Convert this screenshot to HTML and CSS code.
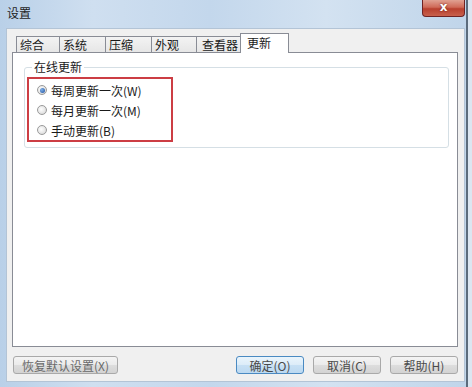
FILE: index.html
```html
<!DOCTYPE html>
<html>
<head>
  <meta charset="UTF-8">
  <title>设置</title>
  <link rel="stylesheet" href="styles.css">
</head>
<body>
  <div class="window">
    <div class="titlebar">
      <span class="title">设置</span>
      <div class="close-btn">x</div>
    </div>

    <div class="client">
      <div class="tabs">
        <div class="tab tab-a">综合</div>
        <div class="tab tab-b">系统</div>
        <div class="tab tab-b">压缩</div>
        <div class="tab tab-c">外观</div>
        <div class="tab tab-d">查看器</div>
        <div class="tab tab-active">更新</div>
      </div>

      <div class="panel">
        <fieldset class="group">
          <legend>在线更新</legend>
          <div class="highlight">
            <label class="radio-row">
              <span class="radio checked"></span>
              <span>每周更新一次(W)</span>
            </label>
            <label class="radio-row">
              <span class="radio"></span>
              <span>每月更新一次(M)</span>
            </label>
            <label class="radio-row">
              <span class="radio"></span>
              <span>手动更新(B)</span>
            </label>
          </div>
        </fieldset>
      </div>

      <div class="buttons">
        <button class="btn btn-wide">恢复默认设置(X)</button>
        <div class="spacer"></div>
        <button class="btn btn-default">确定(O)</button>
        <button class="btn">取消(C)</button>
        <button class="btn">帮助(H)</button>
      </div>
    </div>
  </div>
</body>
</html>
```

FILE: styles.css
```css
body {
  margin: 0;
  width: 472px;
  height: 387px;
  overflow: hidden;
  background-color: #dbe6f1;
  font-family: "Noto Sans CJK SC", "Liberation Sans", sans-serif;
  font-size: 12px;
  color: #1a1a1a;
}

.window {
  width: 468px;
  height: 387px;
  box-sizing: border-box;
  border-right: 2px solid #5b6b7c;
  background: linear-gradient(to right, #b9d0e8 0%, #cfdff0 20%, #c3d7ec 45%, #d3e2f1 70%, #c0d5ea 100%);
  display: flex;
  flex-direction: column;
}

/* title bar */

.titlebar {
  height: 28px;
  display: flex;
  justify-content: space-between;
  align-items: flex-start;
  padding-left: 7px;
  flex-shrink: 0;
}

.title {
  margin-top: 6px;
  line-height: 14px;
  color: #1e1e1e;
}

.close-btn {
  width: 43px;
  height: 17px;
  box-sizing: border-box;
  margin-right: 1px;
  border: 1px solid #6e2323;
  border-top: none;
  border-radius: 0 0 4px 4px;
  background: linear-gradient(to bottom, #e0a192 0%, #cf6a58 45%, #b8402e 55%, #c8604c 100%);
  color: #ffffff;
  font-family: "DejaVu Sans", sans-serif;
  font-weight: bold;
  font-size: 12px;
  line-height: 14px;
  text-align: center;
  text-shadow: 0 0 2px #5a1010;
}

/* client area */

.client {
  flex: 1;
  margin: 0 1px 5px 6px;
  border: 1px solid #b3c4d6;
  background-color: #f0f0f0;
  display: flex;
  flex-direction: column;
}

.tabs {
  display: flex;
  align-items: flex-end;
  height: 19px;
  margin-top: 4px;
  padding-left: 9px;
  position: relative;
  z-index: 1;
}

.tab {
  height: 16px;
  box-sizing: border-box;
  border: 1px solid #898c95;
  border-bottom: none;
  margin-right: -1px;
  padding-left: 3px;
  line-height: 15px;
  background: linear-gradient(to bottom, #f3f3f3, #e6e6e6);
  white-space: nowrap;
}

.tab-a { width: 44px; }
.tab-b { width: 47px; }
.tab-c { width: 46px; }
.tab-d { width: 45px; padding-left: 5px; }

.tab-active {
  width: 49px;
  height: 20px;
  padding-left: 6px;
  margin-bottom: -1px;
  line-height: 17px;
  background: #ffffff;
}

.panel {
  height: 295px;
  box-sizing: border-box;
  margin: 0 6px 0 5px;
  border: 1px solid #898c95;
  background-color: #ffffff;
  padding: 7px 8px 0 11px;
}

.group {
  margin: 0;
  padding: 3px 0 5px 2px;
  border: 1px solid #d5dfe5;
  border-radius: 3px;
}

.group legend {
  margin-left: 5px;
  padding: 0 2px;
  line-height: 14px;
}

.highlight {
  width: 142px;
  border: 2px solid #cc3d44;
  padding: 1px 0 0 0;
}

.radio-row {
  display: flex;
  align-items: center;
  height: 20px;
  padding-left: 8px;
  gap: 4px;
}

.radio {
  width: 10px;
  height: 10px;
  box-sizing: border-box;
  border-radius: 50%;
  border: 1px solid #9a9a9a;
  background: radial-gradient(circle at 40% 40%, #ffffff 0%, #e4e4e4 60%, #c9c9c9 100%);
  display: flex;
  align-items: center;
  justify-content: center;
}

.radio.checked::after {
  content: "";
  width: 5px;
  height: 5px;
  border-radius: 50%;
  background: radial-gradient(circle at 35% 35%, #7fb0e8, #1d4f9e);
}

/* bottom buttons */

.buttons {
  display: flex;
  gap: 9px;
  padding: 9px 6px 0 6px;
}

.spacer {
  flex: 1;
}

.btn {
  width: 68px;
  height: 18px;
  padding: 0;
  box-sizing: border-box;
  border: 1px solid #a9a9a9;
  border-radius: 3px;
  background: linear-gradient(to bottom, #f4f4f4 0%, #ebebeb 50%, #dddddd 51%, #d3d3d3 100%);
  font-family: "Noto Sans CJK SC", "Liberation Sans", sans-serif;
  font-size: 12px;
  line-height: 15px;
  color: #4a4a4a;
}

.btn-wide {
  width: 105px;
  margin-right: -9px;
  color: #6a6a6a;
}

.btn-default {
  border-color: #4a8ac2;
  background: linear-gradient(to bottom, #eaf5fc 0%, #dcecf8 50%, #c7e0f4 51%, #bcd9f1 100%);
}
```
